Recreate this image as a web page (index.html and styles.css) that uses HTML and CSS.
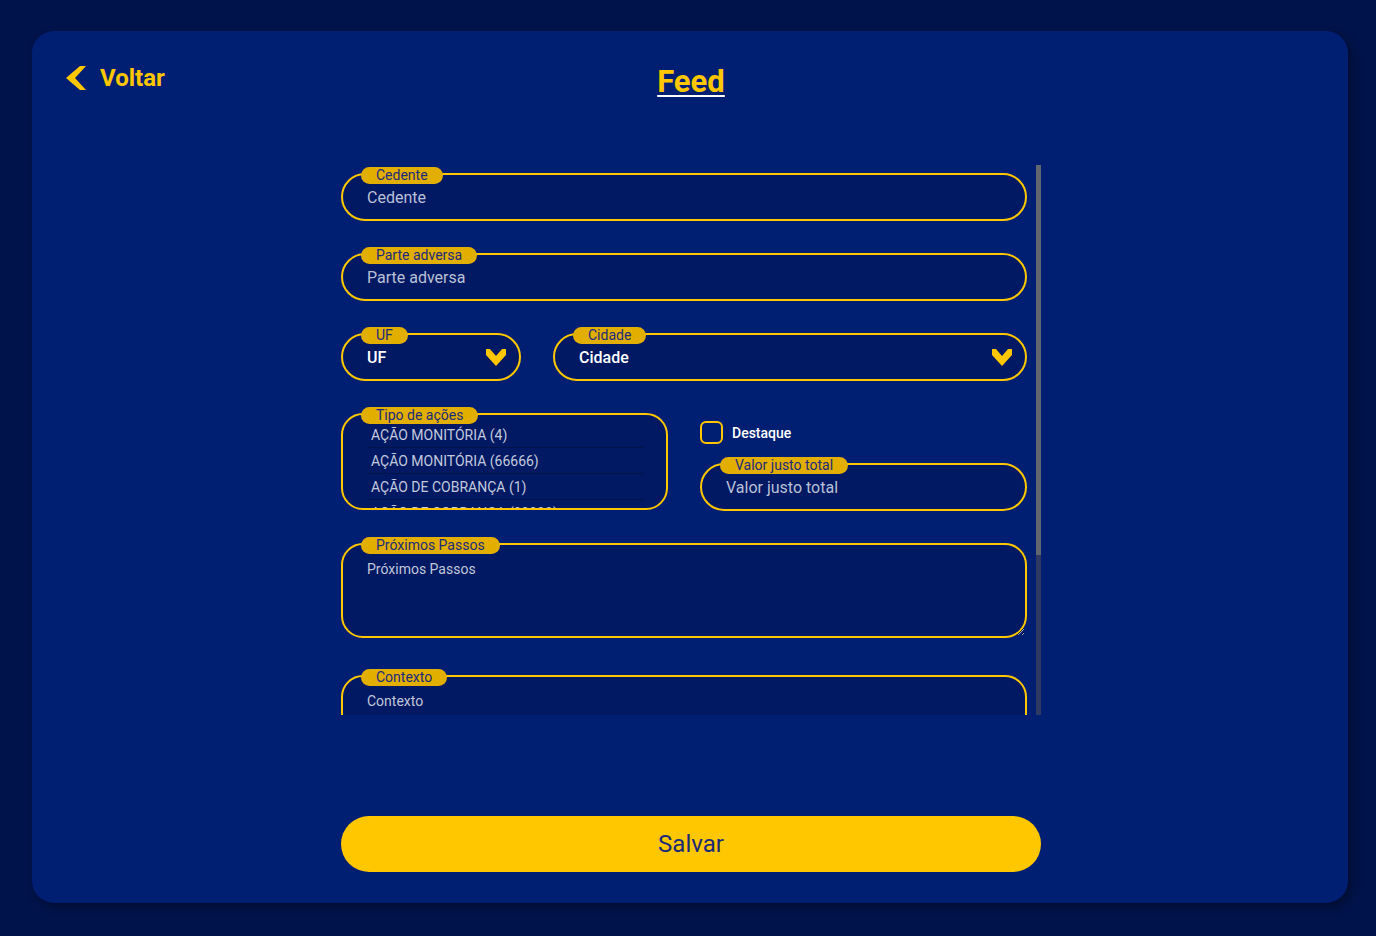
FILE: index.html
```html
<!DOCTYPE html>
<html lang="pt-BR">
<head>
<meta charset="utf-8">
<title>Feed</title>
<link rel="stylesheet" href="styles.css">
</head>
<body>
<main class="card">
  <header class="header">
    <a class="back" href="#">
      <svg class="back-icon" width="20" height="24" viewBox="0 0 20 24"><polygon points="14,0 20,0 9,12 20,24 14,24 0,12" fill="#ffc700"/></svg>
      <span>Voltar</span>
    </a>
    <h1 class="title">Feed</h1>
    <div></div>
  </header>

  <form class="form">
    <div class="scroll-wrap">
      <div class="scroll">
        <div class="field">
          <span class="badge">Cedente</span>
          <input class="input" placeholder="Cedente">
        </div>
        <div class="field">
          <span class="badge">Parte adversa</span>
          <input class="input" placeholder="Parte adversa">
        </div>
        <div class="row">
          <div class="field uf">
            <span class="badge">UF</span>
            <div class="select"><span>UF</span>
              <svg class="chev" width="20" height="17" viewBox="0 0 20 17"><polygon points="0,0 4,0 10,7 16,0 20,0 20,6 10,17 0,6" fill="#ffc700"/></svg>
            </div>
          </div>
          <div class="field grow">
            <span class="badge">Cidade</span>
            <div class="select"><span>Cidade</span>
              <svg class="chev" width="20" height="17" viewBox="0 0 20 17"><polygon points="0,0 4,0 10,7 16,0 20,0 20,6 10,17 0,6" fill="#ffc700"/></svg>
            </div>
          </div>
        </div>
        <div class="row tall">
          <div class="field half">
            <span class="badge">Tipo de ações</span>
            <div class="listbox">
              <ul class="list">
                <li>AÇÃO MONITÓRIA (4)</li>
                <li>AÇÃO MONITÓRIA (66666)</li>
                <li>AÇÃO DE COBRANÇA (1)</li>
                <li>AÇÃO DE COBRANÇA (99999)</li>
              </ul>
            </div>
          </div>
          <div class="side half">
            <label class="check"><span class="box"></span><span>Destaque</span></label>
            <div class="field">
              <span class="badge">Valor justo total</span>
              <input class="input" placeholder="Valor justo total">
            </div>
          </div>
        </div>
        <div class="field area-gap">
          <span class="badge">Próximos Passos</span>
          <textarea class="area" placeholder="Próximos Passos"></textarea>
        </div>
        <div class="field">
          <span class="badge">Contexto</span>
          <textarea class="area" placeholder="Contexto"></textarea>
        </div>
      </div>
      <div class="track"><div class="thumb"></div></div>
    </div>
    <button class="save" type="button">Salvar</button>
  </form>
</main>
</body>
</html>
```
FILE: styles.css
```css
* { box-sizing: border-box; }
html, body { margin: 0; }
body {
  background: #00134a;
  padding: 31px 28px 0 32px;
  font-family: Roboto, "Liberation Sans", sans-serif;
  height: 936px;
  overflow: hidden;
}
.card {
  height: 872px;
  background: #011f72;
  border-radius: 22px;
  box-shadow: 4px 4px 10px rgba(0, 0, 0, 0.35);
  padding: 32px 32px 31px 34px;
  display: flex;
  flex-direction: column;
}
.header {
  display: grid;
  grid-template-columns: 1fr auto 1fr;
  align-items: start;
  height: 36px;
}
.back {
  display: flex;
  align-items: center;
  gap: 14px;
  height: 30px;
  color: #ffc700;
  text-decoration: none;
  font-weight: 700;
  font-size: 24px;
  justify-self: start;
}
.back-icon { display: block; }
.title {
  margin: 0;
  font-size: 31px;
  line-height: 38px;
  font-weight: 700;
  color: #ffc700;
  text-decoration: underline;
  text-decoration-color: #ffffff;
  text-decoration-thickness: 2px;
  text-underline-offset: 3px;
}
.form {
  width: 700px;
  margin: 66px auto 0;
  display: flex;
  flex-direction: column;
}
.scroll-wrap {
  display: flex;
  height: 550px;
  gap: 9px;
}
.scroll {
  flex: 1;
  overflow: hidden;
  padding: 8px 0 5px 0;
  display: flex;
  flex-direction: column;
  gap: 32px;
}
.track {
  width: 5px;
  height: 550px;
  background: #2f3a62;
  flex-shrink: 0;
}
.thumb {
  height: 390px;
  background: #62666f;
}
.field {
  position: relative;
  flex-shrink: 0;
}
.badge {
  position: absolute;
  top: -6px;
  left: 20px;
  height: 17px;
  line-height: 17px;
  padding: 0 15px;
  border-radius: 9px;
  background: #e2af00;
  color: #1c2a7c;
  font-size: 14px;
  z-index: 2;
  white-space: nowrap;
}
.input, .select, .area, .listbox {
  display: block;
  width: 100%;
  border: 2px solid #ffc700;
  background: #011862;
  font-family: Roboto, "Liberation Sans", sans-serif;
}
.input {
  height: 48px;
  border-radius: 24px;
  padding: 0 24px;
  font-size: 16px;
  color: #ffffff;
  outline: none;
}
.input::placeholder { color: #b9c1d6; }
.select {
  height: 48px;
  border-radius: 24px;
  padding: 0 13px 0 24px;
  display: flex;
  align-items: center;
  justify-content: space-between;
  color: #ffffff;
  font-size: 16px;
  font-weight: 500;
}
.chev { display: block; }
.row {
  display: flex;
  gap: 32px;
  flex-shrink: 0;
}
.uf { width: 180px; }
.grow { flex: 1; }
.tall { height: 98px; }
.half { width: 327px; }
.listbox {
  height: 97px;
  border-radius: 22px;
  overflow: hidden;
  padding: 7px 23px 0 24px;
}
.list {
  list-style: none;
  margin: 0;
  padding: 0;
}
.list li {
  height: 26px;
  line-height: 23px;
  padding: 2px 0 0 4px;
  border-bottom: 1px solid #011449;
  font-size: 14px;
  color: #c3cadd;
}
.side {
  display: flex;
  flex-direction: column;
  padding-top: 8px;
  gap: 19px;
}
.check {
  display: flex;
  align-items: center;
  gap: 9px;
  color: #ffffff;
  font-size: 14px;
  font-weight: 500;
  height: 23px;
}
.box {
  width: 23px;
  height: 23px;
  border: 2px solid #ffc700;
  border-radius: 6px;
}
.area {
  height: 95px;
  border-radius: 22px;
  padding: 14px 24px;
  font-size: 14px;
  line-height: 20px;
  color: #ffffff;
  outline: none;
  resize: vertical;
}
.area::placeholder { color: #c0c7da; }
.area-gap { margin-bottom: 5px; }
.save {
  margin-top: 101px;
  height: 56px;
  width: 700px;
  border: none;
  border-radius: 28px;
  background: #ffc700;
  color: #1b2a78;
  font-family: Roboto, "Liberation Sans", sans-serif;
  font-size: 24px;
  font-weight: 400;
  cursor: pointer;
}
```
